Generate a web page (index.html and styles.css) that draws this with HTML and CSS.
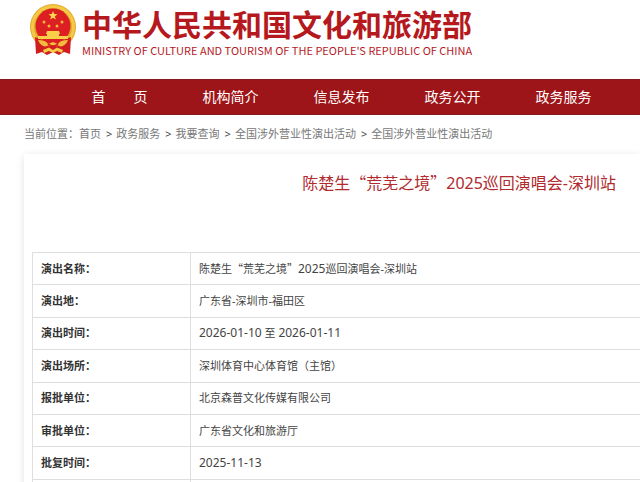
FILE: index.html
```html
<!DOCTYPE html>
<html lang="zh-CN">
<head>
<meta charset="utf-8">
<title>中华人民共和国文化和旅游部</title>
<link rel="stylesheet" href="styles.css">
</head>
<body>
<header class="site-header">
  <svg class="emblem" viewBox="0 0 46 52" aria-hidden="true">
    <circle cx="23" cy="23" r="23" fill="#e3a92c"/>
    <circle cx="23" cy="23" r="20.500" fill="none" stroke="#f3c945" stroke-width="3"/>
    <path d="M5 33 13 36 33 36 41 33 40 50 34 48 29 51 23 48 17 51 12 48 6 50Z" fill="#cf1d20"/>
    <circle cx="23" cy="22" r="17.500" fill="#dc1f22"/>
    <path d="m23 7 1.200 3.100 3.300.1-2.600 2.100.9 3.200-2.800-1.800-2.800 1.800.9-3.200-2.600-2.100 3.300-.1Z" fill="#fbd94b"/>
    <g fill="#f5b83c">
      <circle cx="14" cy="18" r="1.500"/><circle cx="32" cy="18" r="1.500"/>
      <circle cx="19" cy="22" r="1.500"/><circle cx="27" cy="22" r="1.500"/>
    </g>
    <path d="M17 27h12l1 3h-1v2h9v3H8v-3h9v-2h-1Z" fill="#f8cf48"/>
    <path d="M8 36q8 0 10 4l5-2 5 2q2-4 10-4-2 6-9 7l-6-2-6 2q-7-1-9-7Z" fill="#f3bd3b"/>
    <path d="M13 46 19 43.500 23 46 27 43.500 33 46 32 49 27 47 23 49 19 47 14 49Z" fill="#f6cb48"/>
    <path d="M18 40l5 3 5-3M14 44l5-2M32 44l-5-2" stroke="#d71e20" stroke-width="1.500" fill="none"/>
  </svg>
  <div class="brand">
    <div class="brand-name">中华人民共和国文化和旅游部</div>
    <div class="brand-en" lang="en">MINISTRY OF CULTURE AND TOURISM OF THE PEOPLE'S REPUBLIC OF CHINA</div>
  </div>
</header>
<nav class="main-nav">
  <a href="#">首　　页</a>
  <a href="#">机构简介</a>
  <a href="#">信息发布</a>
  <a href="#">政务公开</a>
  <a href="#">政务服务</a>
</nav>
<nav class="breadcrumb">
  <span>当前位置：</span><a href="#">首页</a><span class="sep">&gt;</span><a href="#">政务服务</a><span class="sep">&gt;</span><a href="#">我要查询</a><span class="sep">&gt;</span><a href="#">全国涉外营业性演出活动</a><span class="sep">&gt;</span><a href="#">全国涉外营业性演出活动</a>
</nav>
<main class="card">
  <h1 class="title">陈楚生<span class="quote">“</span>荒芜之境<span class="quote">”</span>2025巡回演唱会-深圳站</h1>
  <table class="details">
    <tr><th scope="row">演出名称：</th><td>陈楚生<span class="quote">“</span>荒芜之境<span class="quote">”</span><span class="num">2025</span>巡回演唱会-深圳站</td></tr>
    <tr><th scope="row">演出地：</th><td>广东省-深圳市-福田区</td></tr>
    <tr><th scope="row">演出时间：</th><td><time class="num">2026-01-10</time> 至 <time class="num">2026-01-11</time></td></tr>
    <tr><th scope="row">演出场所：</th><td>深圳体育中心体育馆（主馆）</td></tr>
    <tr><th scope="row">报批单位：</th><td>北京森普文化传媒有限公司</td></tr>
    <tr><th scope="row">审批单位：</th><td>广东省文化和旅游厅</td></tr>
    <tr><th scope="row">批复时间：</th><td><time class="num">2025-11-13</time></td></tr>
    <tr><td></td><td></td></tr>
  </table>
</main>
</body>
</html>
```
FILE: styles.css
```css
* { box-sizing: border-box; }

body {
  margin: 0;
  background: #fff;
  color: #444;
  font-family: "Noto Sans", "Noto Sans CJK SC", sans-serif;
  font-size: 11px;
  line-height: 16px;
}

a { color: inherit; text-decoration: none; }

.quote { font-family: "Noto Sans CJK SC", sans-serif; line-height: 1; }

.site-header {
  display: flex;
  align-items: flex-start;
  gap: 6px;
  height: 79px;
  padding: 4px 0 0 30px;
}

.emblem { flex: none; width: 46px; height: 52px; }

.brand { color: #b5191d; white-space: nowrap; }

.brand-name {
  font-family: "Noto Sans CJK SC", sans-serif;
  font-size: 30px;
  font-weight: 700;
  line-height: 38px;
}

.brand-en {
  font-family: "Noto Sans CJK SC", sans-serif;
  font-size: 11px;
  font-weight: 400;
  line-height: 16px;
}

.main-nav {
  display: grid;
  grid-template-columns: repeat(5, 111px);
  padding-left: 64px;
  border-top: 1px solid #85191c;
  border-bottom: 1px solid #85191c;
  background: #9d1518;
  color: #fff;
  font-size: 14px;
  line-height: 34px;
  text-align: center;
}

.breadcrumb {
  padding: 11px 24px 12px;
  color: #777;
  white-space: nowrap;
}

.sep { margin: 0 4px 0 5px; color: #444; }

.card {
  margin-left: 24px;
  padding: 16px 0 24px 8px;
  box-shadow: 0 2px 8px rgba(0, 0, 0, 0.12);
}

.title {
  margin: 0 24px 56px 0;
  color: #b02a2e;
  font-size: 16px;
  font-weight: 400;
  line-height: 26px;
  text-align: right;
}

.details {
  width: 100%;
  height: 260px;
  border-collapse: collapse;
}

.details th,
.details td {
  height: 31px;
  padding: 7px 8px;
  border: 1px solid #dedede;
  border-right: 0;
  text-align: left;
}

.details th {
  width: 158px;
  color: #333;
  font-weight: 700;
}

.num { font-size: 12px; line-height: 1; }
```
